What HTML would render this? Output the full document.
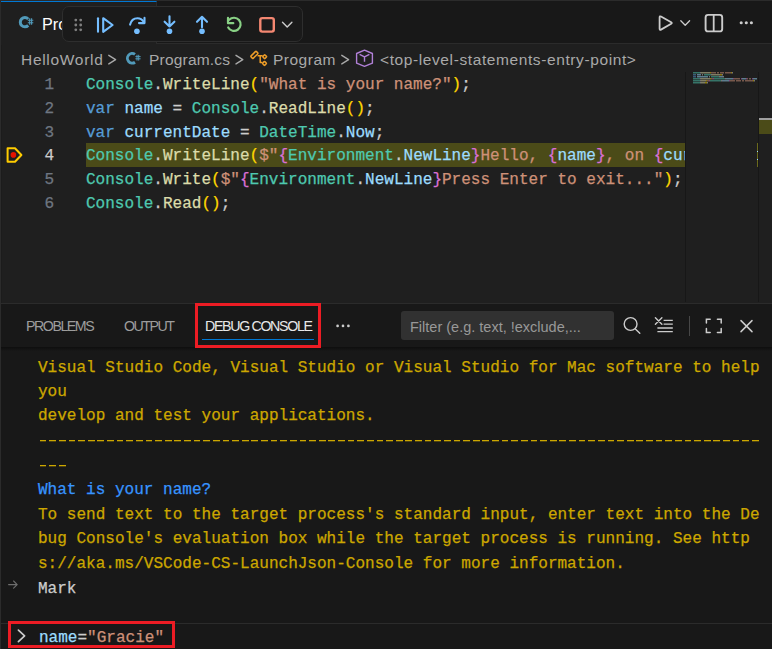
<!DOCTYPE html>
<html><head><meta charset="utf-8">
<style>
*{margin:0;padding:0;box-sizing:border-box}
html,body{width:772px;height:649px;overflow:hidden;background:#1f1f1f;font-family:"Liberation Sans",sans-serif;position:relative}
.abs{position:absolute;white-space:nowrap}
#tabbar{left:0;top:0;width:772px;height:44px;background:#181818;border-bottom:1px solid #2b2b2b;border-top:1px solid #2b2b2b}
#tab{left:1px;top:1px;width:156px;height:43px;background:#1f1f1f;border-top:1px solid #0078d4;border-right:1px solid #2b2b2b}
.tabtext{color:#ffffff;font-size:16.2px;line-height:18px}
#toolbar{left:62px;top:6px;width:241px;height:36px;background:#1a1a1a;border:1px solid #2e2e2e;border-radius:7px;box-shadow:0 1px 6px rgba(0,0,0,.55)}
.crumb{color:#a9a9a9;font-size:15.5px;line-height:18px;top:51px}
.mono{font-family:"Liberation Mono",monospace;font-size:16.04px;line-height:18px;white-space:pre;-webkit-text-stroke:0.25px currentColor}
.ln{color:#6e7681;width:54px;text-align:right;left:0}
.code{left:86px}
.cls{color:#4ec9b0}.fn{color:#dcdcaa}.str{color:#ce9178}.kw{color:#569cd6}.var{color:#9cdcfe}.p{color:#cccccc}
.b1{color:#ffd700}.b2{color:#da70d6}.b3{color:#179fff}
#panel{left:0;top:303px;width:772px;height:346px;background:#181818;border-top:1px solid #2b2b2b}
.ptab{top:318px;font-size:14.2px;line-height:16px;color:#9d9d9d}
.out{color:#cca700;left:38px}
</style></head><body>
<div id="tabbar" class="abs"></div>
<div id="tab" class="abs"></div>
<div class="abs tabtext" style="left:42px;top:15px">Pro</div>

<!-- editor left dark edge -->
<div class="abs" style="left:1px;top:45px;width:1px;height:258px;background:#1c1c1c"></div>

<!-- breadcrumbs -->
<div class="abs crumb" style="left:21px;letter-spacing:0.7px">HelloWorld</div>
<div class="abs crumb" style="left:149px;letter-spacing:0.2px">Program.cs</div>
<div class="abs crumb" style="left:273px;letter-spacing:0.5px">Program</div>
<div class="abs crumb" style="left:380px;letter-spacing:0.6px">&lt;top-level-statements-entry-point&gt;</div>

<!-- line numbers -->
<div class="abs mono ln" style="top:76px">1</div>
<div class="abs mono ln" style="top:100px">2</div>
<div class="abs mono ln" style="top:124px">3</div>
<div class="abs mono ln" style="top:147px;color:#cccccc">4</div>
<div class="abs mono ln" style="top:171px">5</div>
<div class="abs mono ln" style="top:195px">6</div>

<div class="abs" style="left:86px;top:143px;width:599px;height:24px;background:#4b4b18"></div>

<div class="abs mono code" style="top:76px"><span class="cls">Console</span><span class="p">.</span><span class="fn">WriteLine</span><span class="b1">(</span><span class="str">"What is your name?"</span><span class="b1">)</span><span class="p">;</span></div>
<div class="abs mono code" style="top:100px"><span class="kw">var</span> <span class="var">name</span> <span class="p">=</span> <span class="cls">Console</span><span class="p">.</span><span class="fn">ReadLine</span><span class="b1">()</span><span class="p">;</span></div>
<div class="abs mono code" style="top:124px"><span class="kw">var</span> <span class="var">currentDate</span> <span class="p">=</span> <span class="cls">DateTime</span><span class="p">.</span><span class="var">Now</span><span class="p">;</span></div>
<div class="abs mono code" style="top:147px;width:599px;overflow:hidden"><span class="cls">Console</span><span class="p">.</span><span class="fn">WriteLine</span><span class="b1">(</span><span class="str">$"</span><span class="b2">{</span><span class="cls">Environment</span><span class="p">.</span><span class="var">NewLine</span><span class="b2">}</span><span class="str">Hello, </span><span class="b2">{</span><span class="var">name</span><span class="b2">}</span><span class="str">, on </span><span class="b2">{</span><span class="var">currentDate</span></div>
<div class="abs mono code" style="top:171px"><span class="cls">Console</span><span class="p">.</span><span class="fn">Write</span><span class="b1">(</span><span class="str">$"</span><span class="b2">{</span><span class="cls">Environment</span><span class="p">.</span><span class="var">NewLine</span><span class="b2">}</span><span class="str">Press Enter to exit..."</span><span class="b1">)</span><span class="p">;</span></div>
<div class="abs mono code" style="top:195px"><span class="cls">Console</span><span class="p">.</span><span class="fn">Read</span><span class="b1">()</span><span class="p">;</span></div>

<!-- minimap -->
<div class="abs" style="left:685px;top:72px;width:1px;height:230px;background:#171717"></div>
<div class="abs" style="left:758px;top:72px;width:1px;height:230px;background:#171717"></div>

<div id="panel" class="abs"></div>
<div class="abs ptab" style="left:26px;letter-spacing:-1.45px">PROBLEMS</div>
<div class="abs ptab" style="left:124px;letter-spacing:-1.5px">OUTPUT</div>
<div class="abs ptab" style="left:205px;color:#e7e7e7;letter-spacing:-1.32px">DEBUG CONSOLE</div>
<div class="abs" style="left:202px;top:339px;width:112px;height:1px;background:#0078d4"></div>

<div class="abs" style="left:0;top:347px;width:772px;height:4px;background:linear-gradient(#0e0e0e,rgba(24,24,24,0))"></div>
<!-- filter box -->
<div class="abs" style="left:401px;top:311px;width:213px;height:29px;background:#313131;border-radius:3px"></div>
<div class="abs" style="left:410px;top:319px;font-size:14.5px;line-height:16px;color:#989898">Filter (e.g. text, !exclude,...</div>
<div class="abs" style="left:689px;top:316px;width:1px;height:20px;background:#474747"></div>

<!-- console output -->
<div class="abs mono out" style="top:359px">Visual Studio Code, Visual Studio or Visual Studio for Mac software to help</div>
<div class="abs mono out" style="top:383px">you</div>
<div class="abs mono out" style="top:407px">develop and test your applications.</div>
<div class="abs" style="left:38px;top:440px;width:722px;height:1px;background:repeating-linear-gradient(90deg,transparent 0 1.7px,#cca700 1.7px 8.4px,transparent 8.4px 9.625px)"></div><div class="abs" style="left:38px;top:441px;width:722px;height:1px;opacity:.3;background:repeating-linear-gradient(90deg,transparent 0 1.7px,#cca700 1.7px 8.4px,transparent 8.4px 9.625px)"></div>
<div class="abs" style="left:38px;top:465px;width:29px;height:1px;background:repeating-linear-gradient(90deg,transparent 0 1.7px,#cca700 1.7px 8.4px,transparent 8.4px 9.625px)"></div><div class="abs" style="left:38px;top:466px;width:29px;height:1px;opacity:.3;background:repeating-linear-gradient(90deg,transparent 0 1.7px,#cca700 1.7px 8.4px,transparent 8.4px 9.625px)"></div>
<div class="abs mono out" style="top:481px;color:#3794ff">What is your name?</div>
<div class="abs mono out" style="top:506px">To send text to the target process's standard input, enter text into the De</div>
<div class="abs mono out" style="top:530px">bug Console's evaluation box while the target process is running. See http</div>
<div class="abs mono out" style="top:555px">s://aka.ms/VSCode-CS-LaunchJson-Console for more information.</div>
<div class="abs mono out" style="top:580px;color:#cccccc">Mark</div>

<!-- input -->
<div class="abs" style="left:0;top:623px;width:772px;height:1px;background:#2b2b2b"></div>
<div class="abs mono" style="left:39px;top:629px"><span class="var">name</span><span class="p">=</span><span class="str">"Gracie"</span></div>

<!-- red boxes -->
<div class="abs" style="left:195px;top:303px;width:126px;height:45px;border:3px solid #ec1c24"></div>
<div class="abs" style="left:8px;top:621px;width:167px;height:27px;border:3px solid #ec1c24"></div>

<svg class="abs" style="left:0;top:0" width="772" height="649" viewBox="0 0 772 649" fill="none">
<g opacity="0.5"><rect x="693" y="72" width="7" height="1.5" fill="#4ec9b0"/><rect x="700" y="72" width="1" height="1.5" fill="#cccccc"/><rect x="701" y="72" width="9" height="1.5" fill="#dcdcaa"/><rect x="710" y="72" width="1" height="1.5" fill="#ffd700"/><rect x="711" y="72" width="5" height="1.5" fill="#ce9178"/><rect x="717" y="72" width="2" height="1.5" fill="#ce9178"/><rect x="720" y="72" width="4" height="1.5" fill="#ce9178"/><rect x="725" y="72" width="6" height="1.5" fill="#ce9178"/><rect x="731" y="72" width="1" height="1.5" fill="#ffd700"/><rect x="732" y="72" width="1" height="1.5" fill="#cccccc"/><rect x="693" y="74" width="3" height="1.5" fill="#569cd6"/><rect x="697" y="74" width="4" height="1.5" fill="#9cdcfe"/><rect x="702" y="74" width="1" height="1.5" fill="#cccccc"/><rect x="704" y="74" width="7" height="1.5" fill="#4ec9b0"/><rect x="711" y="74" width="1" height="1.5" fill="#cccccc"/><rect x="712" y="74" width="8" height="1.5" fill="#dcdcaa"/><rect x="720" y="74" width="2" height="1.5" fill="#ffd700"/><rect x="722" y="74" width="1" height="1.5" fill="#cccccc"/><rect x="693" y="76" width="3" height="1.5" fill="#569cd6"/><rect x="697" y="76" width="11" height="1.5" fill="#9cdcfe"/><rect x="709" y="76" width="1" height="1.5" fill="#cccccc"/><rect x="711" y="76" width="8" height="1.5" fill="#4ec9b0"/><rect x="719" y="76" width="1" height="1.5" fill="#cccccc"/><rect x="720" y="76" width="3" height="1.5" fill="#9cdcfe"/><rect x="723" y="76" width="1" height="1.5" fill="#cccccc"/><rect x="693" y="78" width="7" height="1.5" fill="#4ec9b0"/><rect x="700" y="78" width="1" height="1.5" fill="#cccccc"/><rect x="701" y="78" width="9" height="1.5" fill="#dcdcaa"/><rect x="710" y="78" width="1" height="1.5" fill="#ffd700"/><rect x="711" y="78" width="2" height="1.5" fill="#ce9178"/><rect x="713" y="78" width="1" height="1.5" fill="#da70d6"/><rect x="714" y="78" width="11" height="1.5" fill="#4ec9b0"/><rect x="725" y="78" width="1" height="1.5" fill="#cccccc"/><rect x="726" y="78" width="7" height="1.5" fill="#9cdcfe"/><rect x="733" y="78" width="1" height="1.5" fill="#da70d6"/><rect x="734" y="78" width="6" height="1.5" fill="#ce9178"/><rect x="741" y="78" width="1" height="1.5" fill="#da70d6"/><rect x="742" y="78" width="4" height="1.5" fill="#9cdcfe"/><rect x="746" y="78" width="1" height="1.5" fill="#da70d6"/><rect x="747" y="78" width="1" height="1.5" fill="#ce9178"/><rect x="749" y="78" width="2" height="1.5" fill="#ce9178"/><rect x="752" y="78" width="1" height="1.5" fill="#da70d6"/><rect x="753" y="78" width="4" height="1.5" fill="#9cdcfe"/><rect x="693" y="80" width="7" height="1.5" fill="#4ec9b0"/><rect x="700" y="80" width="1" height="1.5" fill="#cccccc"/><rect x="701" y="80" width="5" height="1.5" fill="#dcdcaa"/><rect x="706" y="80" width="1" height="1.5" fill="#ffd700"/><rect x="707" y="80" width="2" height="1.5" fill="#ce9178"/><rect x="709" y="80" width="1" height="1.5" fill="#da70d6"/><rect x="710" y="80" width="11" height="1.5" fill="#4ec9b0"/><rect x="721" y="80" width="1" height="1.5" fill="#cccccc"/><rect x="722" y="80" width="7" height="1.5" fill="#9cdcfe"/><rect x="729" y="80" width="1" height="1.5" fill="#da70d6"/><rect x="730" y="80" width="5" height="1.5" fill="#ce9178"/><rect x="736" y="80" width="5" height="1.5" fill="#ce9178"/><rect x="742" y="80" width="2" height="1.5" fill="#ce9178"/><rect x="745" y="80" width="8" height="1.5" fill="#ce9178"/><rect x="753" y="80" width="1" height="1.5" fill="#ffd700"/><rect x="754" y="80" width="1" height="1.5" fill="#cccccc"/><rect x="693" y="82" width="7" height="1.5" fill="#4ec9b0"/><rect x="700" y="82" width="1" height="1.5" fill="#cccccc"/><rect x="701" y="82" width="4" height="1.5" fill="#dcdcaa"/><rect x="705" y="82" width="2" height="1.5" fill="#ffd700"/><rect x="707" y="82" width="1" height="1.5" fill="#cccccc"/></g>
  <rect x="759" y="118" width="13" height="2" fill="#a0a0a0"/>
  <rect x="759" y="120" width="13" height="14" fill="#4b4b18"/>
  <rect x="757" y="143" width="1" height="24" fill="#6b6a1c"/>
  <rect x="757" y="151" width="1" height="1" fill="#9cdcfe"/>
  <rect x="757" y="159" width="1" height="1" fill="#9cdcfe"/>
  <!-- toolbar -->
  <rect x="62.5" y="6.5" width="240" height="35" rx="6.5" fill="#1a1a1a" stroke="#2e2e2e"/>
  <g fill="#808080">
    <circle cx="75.8" cy="20.1" r="1.4"/><circle cx="80.7" cy="20.1" r="1.4"/>
    <circle cx="75.8" cy="25" r="1.4"/><circle cx="80.7" cy="25" r="1.4"/>
    <circle cx="75.8" cy="29.8" r="1.4"/><circle cx="80.7" cy="29.8" r="1.4"/>
  </g>
  <g stroke="#75beff" stroke-width="2.1" stroke-linecap="round" stroke-linejoin="round">
    <path d="M98 18.2V31.8"/>
    <path d="M103.2 18.2L112.6 25L103.2 31.8Z"/>
    <path d="M130.1 24.6C131 20.5 134 18.2 137.5 18.2C140.2 18.2 142.4 19.8 143.6 21.8"/>
    <path d="M144.5 17.9V23.1H139"/>
    <path d="M169.5 16.3V26.5M164.6 21.7L169.5 26.5L174.4 21.7"/>
    <path d="M202 27.2V16.8M197 21.8L202 16.8L207 21.8"/>
  </g>
  <g fill="#75beff">
    <circle cx="136.9" cy="31.3" r="2.8"/>
    <circle cx="169.5" cy="31.3" r="2.8"/>
    <circle cx="202" cy="31.3" r="2.8"/>
  </g>
  <g stroke="#89d185" stroke-width="2.2" stroke-linecap="round" stroke-linejoin="round">
    <path d="M229.2 19.8A6.6 6.6 0 1 1 228.2 27.5"/>
    <path d="M228 17.8V23.2H233.3"/>
  </g>
  <rect x="260.3" y="18.1" width="13.5" height="13.5" rx="2" stroke="#f48771" stroke-width="2.4"/>
  <path d="M282.5 22.3L287.2 27L291.9 22.3" stroke="#cccccc" stroke-width="1.4" stroke-linecap="round" stroke-linejoin="round"/>

  <!-- tab C# icon -->
  <path d="M28.2 19A4.6 4.6 0 1 0 28.2 25.4" stroke="#519aba" stroke-width="3"/>
  <g stroke="#519aba" stroke-width="1.1"><path d="M29.7 18.2V24.8M31.6 18.2V24.8M27.8 20.3H33.3M27.8 22.7H33.3"/></g>

  <!-- right tab actions -->
  <path d="M659.6 17.4Q659.6 15.8 661 16.5L671.2 22.2Q672.4 23 671.2 23.8L661 29.6Q659.6 30.3 659.6 28.7Z" stroke="#cccccc" stroke-width="1.8" stroke-linejoin="round"/>
  <path d="M680.8 20.8L685.2 25.2L689.6 20.8" stroke="#cccccc" stroke-width="1.3" stroke-linecap="round" stroke-linejoin="round"/>
  <rect x="705.6" y="14.9" width="16.6" height="16.5" rx="2.5" stroke="#cccccc" stroke-width="1.9"/>
  <path d="M713.7 15V31.4" stroke="#cccccc" stroke-width="1.8"/>
  <g fill="#cccccc"><circle cx="741.2" cy="22.8" r="1.55"/><circle cx="746.3" cy="22.8" r="1.55"/><circle cx="751.4" cy="22.8" r="1.55"/></g>

  <!-- breadcrumb chevrons -->
  <g stroke="#a9a9a9" stroke-width="1.4" stroke-linecap="round" stroke-linejoin="round">
    <path d="M108.8 55.3L115.6 59.6L108.8 63.9"/>
    <path d="M236 55.3L242.8 59.6L236 63.9"/>
    <path d="M341.8 55.3L348.6 59.6L341.8 63.9"/>
  </g>
  <!-- breadcrumb C# icon -->
  <path d="M135 54.4A4.8 4.8 0 1 0 135 62.2" stroke="#519aba" stroke-width="2.9"/>
  <g stroke="#519aba" stroke-width="1"><path d="M137 54.8V60.6M138.7 54.8V60.6M135.4 56.6H140.6M135.4 58.8H140.6"/></g>
  <!-- class icon (orange) -->
  <g stroke="#ee9d28" stroke-width="1.5" stroke-linejoin="round" fill="none">
    <rect x="250.6" y="53.3" width="7.6" height="3.2" rx="0.8" transform="rotate(-45 254.4 54.9)"/>
    <path d="M257.6 55.7H262.6M260.2 55.7V62.5H262.4"/>
    <rect x="263.2" y="55.2" width="3" height="3" rx="0.5" transform="rotate(45 264.7 56.7)"/>
    <rect x="263" y="61.9" width="3" height="3" rx="0.5" transform="rotate(45 264.5 63.4)"/>
  </g>
  <!-- cube icon (purple) -->
  <g stroke="#b180d7" stroke-width="1.4" stroke-linejoin="round">
    <path d="M364.5 50.1L372.4 53.5V63.2L364.5 66.3L356.6 63.2V53.5Z"/>
    <path d="M359.6 54.4L364.5 56.9L369.4 54.4M364.5 56.9V61.8"/>
  </g>
  <!-- stopped frame gutter icon -->
  <path d="M7.6 148.2H15L21.4 155L15 161.8H7.6Z" stroke="#ffcc00" stroke-width="2" stroke-linejoin="round"/>
  <circle cx="13.4" cy="154.9" r="2.8" fill="#e51400"/>

  <!-- panel actions -->
  <g stroke="#cccccc" stroke-width="1.4" stroke-linecap="round">
    <circle cx="630.6" cy="324" r="6.4"/>
    <path d="M635.4 328.9L639.8 333.2"/>
    <path d="M655.4 317.8L661.9 324.2M661.9 317.8L655.4 324.2"/>
  </g>
  <g stroke="#cccccc" stroke-width="1.3">
    <path d="M663.6 320.4H672.8M663.6 324.1H672.8M657.4 328H672.8M657.4 331.6H672.8"/>
  </g>
  <g stroke="#cccccc" stroke-width="1.5" stroke-linecap="round">
    <path d="M706.4 323V319.2H710.2M717.4 319.2H721.2V323M721.2 328.6V332.4H717.4M710.2 332.4H706.4V328.6"/>
    <path d="M741 320.6L752 331.6M752 320.6L741 331.6"/>
  </g>
  <!-- ellipsis panel -->
  <g fill="#cccccc"><circle cx="337.6" cy="325.9" r="1.35"/><circle cx="343" cy="325.9" r="1.35"/><circle cx="348.4" cy="325.9" r="1.35"/></g>

  <!-- console arrow -->
  <path d="M8.6 584.6H17.2M13.6 581L17.2 584.6L13.6 588.2" stroke="#6e6e6e" stroke-width="1.1" stroke-linecap="round" stroke-linejoin="round"/>
  <!-- input chevron -->
  <path d="M18.4 630.2L24.6 635.9L18.4 641.6" stroke="#cccccc" stroke-width="1.7" stroke-linecap="round" stroke-linejoin="round"/>
</svg>
<div class="abs" style="left:0;top:0;width:1px;height:649px;background:#2b2b2b"></div>
</body></html>
